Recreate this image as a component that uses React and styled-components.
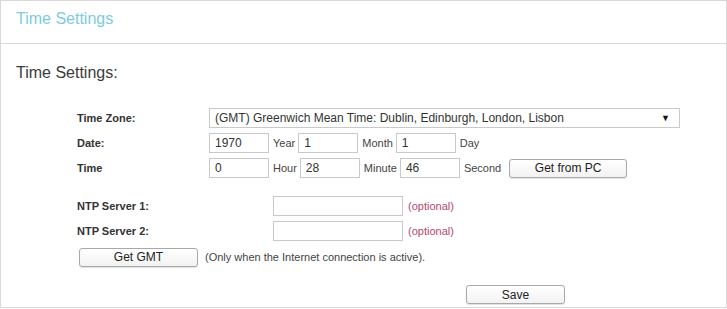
import React from 'react'
import styled, { createGlobalStyle } from 'styled-components'

const Global = createGlobalStyle`
  html, body {
    margin: 0;
    padding: 0;
    background: #fff;
  }
  body {
    font-family: 'Liberation Sans', Arial, sans-serif;
    color: #333;
  }
`

const Frame = styled.div`
  box-sizing: border-box;
  width: 727px;
  height: 308px;
  border: 1px solid #d9d9d9;
  display: flex;
  flex-direction: column;
`

const Header = styled.div`
  height: 43px;
  border-bottom: 1px solid #d9d9d9;
  display: flex;
  align-items: flex-start;
  padding: 9px 0 0 15px;
  box-sizing: border-box;
  font-size: 16px;
  color: #7dcbdf;
`

const SectionTitle = styled.div`
  margin: 20px 0 0 15px;
  font-size: 16px;
  line-height: 18px;
  color: #3b3b3b;
`

const Form = styled.div`
  display: flex;
  flex-direction: column;
  padding-left: 76px;
  margin-top: 26px;
`

const Row = styled.div`
  display: flex;
  align-items: center;
  height: 20px;
  margin-top: ${({ gap }) => gap || 0}px;
`

const Label = styled.div`
  width: ${({ w }) => w || 132}px;
  flex: none;
  font-size: 11px;
  font-weight: bold;
  color: #333;
`

const Field = styled.div`
  box-sizing: border-box;
  width: ${({ w }) => w || 60}px;
  height: 20px;
  border: 1px solid #c9c9c9;
  padding: 0 5px;
  display: flex;
  align-items: center;
  font-size: 12px;
  color: #333;
  flex: none;
`

const Select = styled(Field)`
  justify-content: space-between;
  padding-right: 9px;
`

const Arrow = styled.span`
  font-size: 9px;
  color: #111;
`

const Unit = styled.span`
  font-size: 11px;
  color: #444;
  margin: 0 ${({ after }) => after || 3}px 0 4px;
  flex: none;
`

const Button = styled.div`
  box-sizing: border-box;
  width: ${({ w }) => w}px;
  height: 19px;
  margin-left: ${({ offset }) => offset || 0}px;
  border: 1px solid #a9a9a9;
  border-radius: 3px;
  background: linear-gradient(#ffffff, #f2f2f2);
  box-shadow: 0 1px 1px rgba(0, 0, 0, 0.12);
  display: flex;
  align-items: center;
  justify-content: center;
  font-size: 12px;
  color: #222;
  flex: none;
`

const Optional = styled.span`
  margin-left: 5px;
  font-size: 11px;
  color: #b5476c;
`

const Note = styled.span`
  margin-left: 7px;
  font-size: 11px;
  color: #444;
`

const SaveRow = styled.div`
  display: flex;
  padding-left: 465px;
  margin-top: 18px;
`

export default function App() {
  return (
    <>
      <Global />
      <Frame>
        <Header>Time Settings</Header>
        <SectionTitle>Time Settings:</SectionTitle>
        <Form>
          <Row>
            <Label>Time Zone:</Label>
            <Select w={471}>
              <span>(GMT) Greenwich Mean Time: Dublin, Edinburgh, London, Lisbon</span>
              <Arrow>▼</Arrow>
            </Select>
          </Row>
          <Row gap={5}>
            <Label>Date:</Label>
            <Field>1970</Field>
            <Unit>Year</Unit>
            <Field>1</Field>
            <Unit>Month</Unit>
            <Field>1</Field>
            <Unit>Day</Unit>
          </Row>
          <Row gap={5}>
            <Label>Time</Label>
            <Field>0</Field>
            <Unit>Hour</Unit>
            <Field>28</Field>
            <Unit>Minute</Unit>
            <Field>46</Field>
            <Unit after={8}>Second</Unit>
            <Button w={118}>Get from PC</Button>
          </Row>
          <Row gap={18}>
            <Label w={196}>NTP Server 1:</Label>
            <Field w={130} />
            <Optional>(optional)</Optional>
          </Row>
          <Row gap={5}>
            <Label w={196}>NTP Server 2:</Label>
            <Field w={130} />
            <Optional>(optional)</Optional>
          </Row>
          <Row gap={6}>
            <Button w={119} offset={2}>Get GMT</Button>
            <Note>(Only when the Internet connection is active).</Note>
          </Row>
        </Form>
        <SaveRow>
          <Button w={99}>Save</Button>
        </SaveRow>
      </Frame>
    </>
  )
}
